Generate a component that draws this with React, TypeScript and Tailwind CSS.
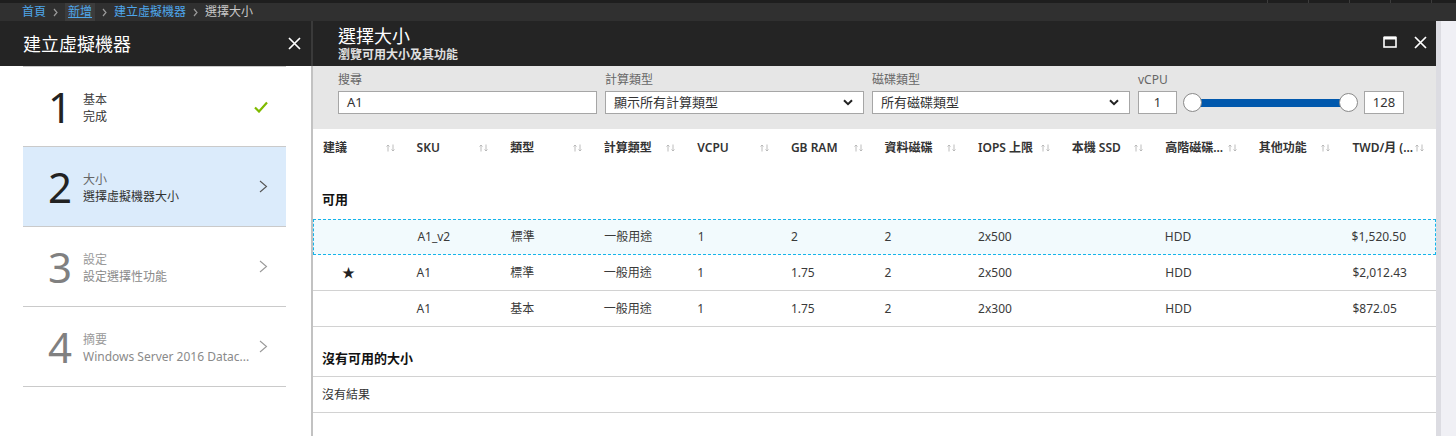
import React from "react"

const font = "font-['Noto_Sans','Noto_Sans_CJK_TC',sans-serif]"

const columns = [
  "建議",
  "SKU",
  "類型",
  "計算類型",
  "VCPU",
  "GB RAM",
  "資料磁碟",
  "IOPS 上限",
  "本機 SSD",
  "高階磁碟...",
  "其他功能",
  "TWD/月 (...",
]

const rows = [
  { star: false, selected: true, cells: ["A1_v2", "標準", "一般用途", "1", "2", "2", "2x500", "", "HDD", "", "$1,520.50"] },
  { star: true, selected: false, cells: ["A1", "標準", "一般用途", "1", "1.75", "2", "2x500", "", "HDD", "", "$2,012.43"] },
  { star: false, selected: false, cells: ["A1", "基本", "一般用途", "1", "1.75", "2", "2x300", "", "HDD", "", "$872.05"] },
]

const steps = [
  { n: "1", title: "基本", sub: "完成", done: true, active: false, dim: false },
  { n: "2", title: "大小", sub: "選擇虛擬機器大小", done: false, active: true, dim: false },
  { n: "3", title: "設定", sub: "設定選擇性功能", done: false, active: false, dim: true },
  { n: "4", title: "摘要", sub: "Windows Server 2016 Datac...", done: false, active: false, dim: true },
]

function CloseIcon() {
  return (
    <svg width="13" height="13" viewBox="0 0 13 13">
      <path d="M1 1L12 12M12 1L1 12" stroke="#fff" strokeWidth="1.7" />
    </svg>
  )
}

function MaxIcon() {
  return (
    <svg width="14" height="12" viewBox="0 0 14 12">
      <rect x="1" y="1.5" width="12" height="9.5" fill="none" stroke="#fff" strokeWidth="1.6" />
      <rect x="1" y="0.5" width="12" height="3" fill="#fff" />
    </svg>
  )
}

function Crumb() {
  return (
    <svg width="5" height="9" viewBox="0 0 5 9" className="mx-[7px]">
      <path d="M1 1L4 4.5L1 8" fill="none" stroke="#9a9a9a" strokeWidth="1.2" />
    </svg>
  )
}

function SortArrows() {
  return (
    <svg width="9" height="8" viewBox="0 0 9 8">
      <path d="M2 7.5V1M0.5 2.5L2 1L3.5 2.5" fill="none" stroke="#b4b4b4" strokeWidth="0.9" />
      <path d="M7 0.5V7M5.5 5.5L7 7L8.5 5.5" fill="none" stroke="#b4b4b4" strokeWidth="0.9" />
    </svg>
  )
}

function Chevron({ color }: { color: string }) {
  return (
    <svg width="9" height="13" viewBox="0 0 9 13">
      <path d="M1 1L7.5 6.5L1 12" fill="none" stroke={color} strokeWidth="1.1" />
    </svg>
  )
}

function DownChevron() {
  return (
    <svg width="10" height="7" viewBox="0 0 10 7">
      <path d="M1 1.2L5 5.2L9 1.2" fill="none" stroke="#222" strokeWidth="2" />
    </svg>
  )
}

function Select({ label, value, width }: { label: string; value: string; width: string }) {
  return (
    <div className={width}>
      <div className="h-[16px] text-[12px] leading-[16px] text-[#666]">{label}</div>
      <div className="mt-[3px] flex h-[23px] items-center justify-between border border-[#a6a6a6] bg-white pl-[8px] pr-[10px] text-[13px] text-[#333]">
        <span>{value}</span>
        <DownChevron />
      </div>
    </div>
  )
}

export default function App() {
  return (
    <div className={`${font} h-[436px] w-[1456px] overflow-hidden bg-white`}>
      {/* top strip */}
      <div className="flex h-[3px] bg-[#1e1e1e]">
        <div className="flex-1" />
        <div className="w-[41px] border-l border-[#3c3c3c]" />
        <div className="w-[41px] border-l border-[#3c3c3c]" />
        <div className="w-[41px] border-l border-[#3c3c3c]" />
        <div className="w-[41px] border-l border-[#3c3c3c]" />
        <div className="w-[25px] border-l border-[#3c3c3c]" />
      </div>

      {/* breadcrumb */}
      <div className="flex h-[18px] items-center bg-[#303030] pl-[22px] text-[12px] leading-[18px]">
        <span className="text-[#4ea6ea]">首頁</span>
        <Crumb />
        <span className="flex h-[18px] items-center bg-[#3c3c3c] px-[3px] text-[#4ea6ea] underline">新增</span>
        <Crumb />
        <span className="text-[#4ea6ea]">建立虛擬機器</span>
        <Crumb />
        <span className="text-[#c8c8c8]">選擇大小</span>
      </div>

      <div className="flex h-[415px]">
        {/* left blade */}
        <div className="flex w-[311px] flex-col">
          <div className="flex h-[45px] items-center justify-between bg-[#242424] pl-[23px] pr-[10px]">
            <span className="text-[18px] leading-[24px] text-white">建立虛擬機器</span>
            <CloseIcon />
          </div>
          <div className="flex-1 pl-[23px] pr-[25px]">
            <div className="border-t border-[#cacaca]">
              {steps.map((s) => (
                <div
                  key={s.n}
                  className={`flex h-[80px] items-center border-b border-[#cacaca] pl-[25px] pr-[18px] ${s.active ? "bg-[#dbebfb]" : ""}`}
                >
                  <div className={`w-[35px] text-[42px] leading-none ${s.dim ? "text-[#808080]" : "text-[#222]"}`}>
                    {s.n}
                  </div>
                  <div className="mt-[3px] flex min-w-0 flex-1 flex-col text-[12px] leading-[17px]">
                    <span className={s.dim ? "text-[#999]" : s.active ? "text-[#666]" : "text-[#444]"}>{s.title}</span>
                    <span className={`whitespace-nowrap ${s.dim ? "text-[#8a8a8a]" : "text-[#333]"}`}>{s.sub}</span>
                  </div>
                  {s.done ? (
                    <svg width="14" height="12" viewBox="0 0 14 12">
                      <path d="M1 6.5L5 10.5L13 1.5" fill="none" stroke="#7fba00" strokeWidth="2.2" />
                    </svg>
                  ) : (
                    <Chevron color={s.dim ? "#9a9a9a" : "#555"} />
                  )}
                </div>
              ))}
            </div>
          </div>
        </div>

        {/* separator */}
        <div className="flex w-[2px] flex-col">
          <div className="h-[45px] bg-[#3a3a3a]" />
          <div className="flex-1 bg-[#c2c2c2]" />
        </div>

        {/* right blade */}
        <div className="flex w-[1123px] flex-col">
          <div className="flex h-[45px] items-center justify-between bg-[#242424] pl-[25px] pr-[9px]">
            <div className="flex flex-col pt-[1px]">
              <span className="text-[18px] leading-[22px] text-white">選擇大小</span>
              <span className="text-[12px] font-bold leading-[16px] text-[#e0e0e0]">瀏覽可用大小及其功能</span>
            </div>
            <div className="mb-[3px] flex items-center gap-[17px]">
              <MaxIcon />
              <CloseIcon />
            </div>
          </div>

          {/* filters */}
          <div className="flex h-[63px] gap-[8px] bg-[#e6e6e6] pl-[25px] pt-[6px]">
            <div className="w-[259px]">
              <div className="h-[16px] text-[12px] leading-[16px] text-[#666]">搜尋</div>
              <div className="mt-[3px] flex h-[23px] items-center border border-[#a6a6a6] bg-white pl-[8px] text-[13px] text-[#333]">
                A1
              </div>
            </div>
            <Select label="計算類型" value="顯示所有計算類型" width="w-[259px]" />
            <Select label="磁碟類型" value="所有磁碟類型" width="w-[258px]" />
            <div className="w-[266px]">
              <div className="h-[16px] text-[12px] leading-[16px] text-[#666]">vCPU</div>
              <div className="mt-[3px] flex h-[23px] items-center">
                <div className="flex h-[23px] w-[39px] items-center justify-center border border-[#a6a6a6] bg-white text-[13px] text-[#333]">
                  1
                </div>
                <div className="relative mx-[5px] h-[23px] w-[177px]">
                  <div className="absolute left-[12px] right-[12px] top-[8px] h-[8px] bg-[#0058ad]" />
                  <div className="absolute left-[1px] top-[2px] h-[19px] w-[19px] rounded-full border border-[#8a8a8a] bg-white" />
                  <div className="absolute right-[1px] top-[2px] h-[19px] w-[19px] rounded-full border border-[#8a8a8a] bg-white" />
                </div>
                <div className="flex h-[23px] w-[40px] items-center justify-center border border-[#a6a6a6] bg-white text-[13px] text-[#333]">
                  128
                </div>
              </div>
            </div>
          </div>

          {/* table */}
          <div className="grid h-[38px] grid-cols-12 items-center">
            {columns.map((c) => (
              <div key={c} className="flex items-center justify-between pl-[10px] pr-[12px]">
                <span className="whitespace-nowrap text-[12px] font-semibold leading-[16px] text-[#333]">{c}</span>
                <SortArrows />
              </div>
            ))}
          </div>

          <div className="flex h-[52px] items-end pb-[11px] pl-[9px] text-[13px] font-bold leading-[18px] text-[#111]">
            可用
          </div>

          {rows.map((r, i) => (
            <div
              key={i}
              className={`grid h-[36px] grid-cols-12 items-center text-[12px] text-[#3a3a3a] ${
                r.selected ? "border border-dashed border-[#14b4ea] bg-[#f2fafd]" : "border-b border-[#d2d2d2]"
              }`}
            >
              <div className="pl-[29px] text-[13px] text-[#222]">{r.star ? "★" : ""}</div>
              {r.cells.map((c, j) => (
                <div key={j} className="whitespace-nowrap pl-[10px]">
                  {c}
                </div>
              ))}
            </div>
          ))}

          <div className="flex h-[50px] items-end border-b border-[#d2d2d2] pb-[9px] pl-[9px] text-[13px] font-bold leading-[18px] text-[#111]">
            沒有可用的大小
          </div>
          <div className="flex h-[36px] items-center border-b border-[#d2d2d2] pl-[9px] text-[12px] text-[#333]">
            沒有結果
          </div>
        </div>

        {/* scrollbar */}
        <div className="flex w-[20px]">
          <div className="w-[5px] bg-[#dcdce2]" />
          <div className="flex-1 bg-[#f0f0f5]" />
        </div>
      </div>
    </div>
  )
}
